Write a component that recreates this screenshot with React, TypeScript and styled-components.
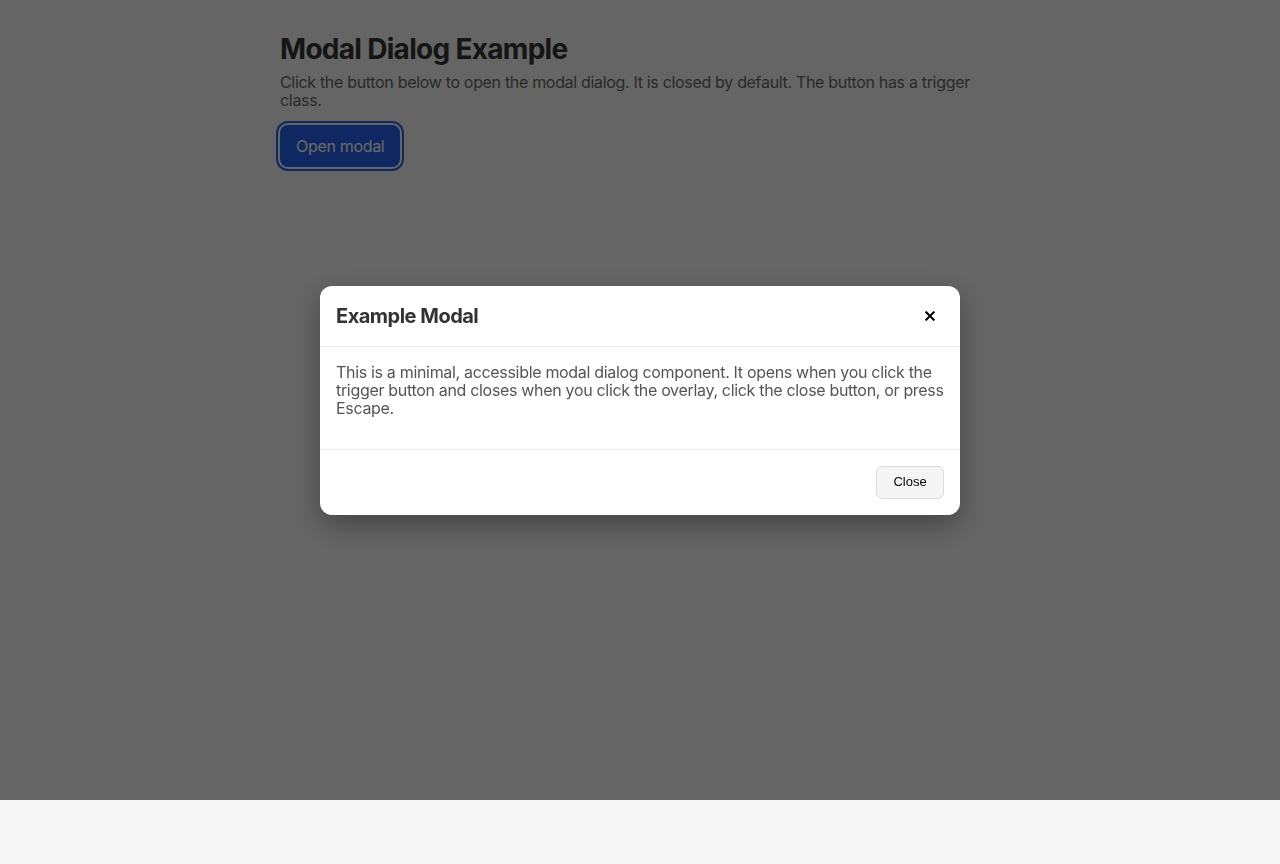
import React from "react";
import styled, { createGlobalStyle } from "styled-components";

const GlobalStyle = createGlobalStyle`
  * { box-sizing: border-box; }
  html, body { margin: 0; padding: 0; }
  body {
    background: #f6f6f6;
    font-family: Inter, "Noto Sans", "Liberation Sans", sans-serif;
    color: #333;
  }
`;

const Page = styled.main`
  max-width: 720px;
  margin: 0 auto;
  padding: 32px 0;
`;

const Title = styled.h1`
  margin: 0 0 7px;
  font-size: 28px;
  line-height: 34px;
  font-weight: 700;
  color: #333;
  letter-spacing: -0.7px;
`;

const Intro = styled.p`
  margin: 0 0 16px;
  font-size: 16px;
  line-height: 18px;
  color: #666;
  letter-spacing: -0.32px;
`;

const TriggerButton = styled.button`
  font-family: inherit;
  font-size: 16px;
  line-height: 20px;
  padding: 11px 16px;
  color: #fff;
  background: #2563eb;
  border: none;
  border-radius: 8px;
  cursor: pointer;
  letter-spacing: -0.32px;
  box-shadow: 0 0 0 2px #f6f6f6, 0 0 0 4px #2563eb;
`;

const Overlay = styled.div`
  position: fixed;
  top: 0;
  left: 0;
  right: 0;
  height: 800px;
  background: rgba(0, 0, 0, 0.59);
  display: flex;
  align-items: center;
  justify-content: center;
`;

const Dialog = styled.div`
  width: 640px;
  background: #fff;
  border-radius: 12px;
  box-shadow: 0 10px 30px rgba(0, 0, 0, 0.35);
  overflow: hidden;
`;

const Header = styled.header`
  display: flex;
  align-items: center;
  justify-content: space-between;
  padding: 16px;
  border-bottom: 1px solid #eaeaea;
`;

const DialogTitle = styled.h2`
  margin: 0;
  font-size: 20px;
  line-height: 28px;
  font-weight: 700;
  color: #333;
  letter-spacing: -0.5px;
`;

const IconButton = styled.button`
  width: 28px;
  height: 28px;
  display: flex;
  align-items: center;
  justify-content: center;
  padding: 0;
  background: transparent;
  border: none;
  cursor: pointer;
  color: #000;
`;

const Body = styled.div`
  padding: 16px 16px 32px;
`;

const BodyText = styled.p`
  margin: 0;
  font-size: 16px;
  line-height: 18px;
  color: #555;
  letter-spacing: -0.32px;
`;

const Footer = styled.footer`
  display: flex;
  justify-content: flex-end;
  padding: 16px;
  border-top: 1px solid #eaeaea;
`;

const SecondaryButton = styled.button`
  font-family: "Liberation Sans", Arial, sans-serif;
  font-size: 13px;
  line-height: 16px;
  height: 33px;
  min-width: 68px;
  padding: 0 16px;
  color: #000;
  background: #f5f5f5;
  border: 1px solid #dcdcdc;
  border-radius: 6px;
  cursor: pointer;
`;

const CloseIcon = () => (
  <svg width="10" height="10" viewBox="0 0 10 10" aria-hidden="true">
    <path d="M1.3 1.3 L8.7 8.7 M8.7 1.3 L1.3 8.7" stroke="#000" strokeWidth="2" strokeLinecap="square" />
  </svg>
);

export default function App() {
  return (
    <>
      <GlobalStyle />
      <Page>
        <Title>Modal Dialog Example</Title>
        <Intro>
          Click the button below to open the modal dialog. It is closed by default. The button has a trigger
          class.
        </Intro>
        <TriggerButton className="trigger">Open modal</TriggerButton>
      </Page>
      <Overlay>
        <Dialog role="dialog" aria-modal="true" aria-labelledby="modal-title">
          <Header>
            <DialogTitle id="modal-title">Example Modal</DialogTitle>
            <IconButton aria-label="Close">
              <CloseIcon />
            </IconButton>
          </Header>
          <Body>
            <BodyText>
              This is a minimal, accessible modal dialog component. It opens when you click the trigger button and
              closes when you click the overlay, click the close button, or press Escape.
            </BodyText>
          </Body>
          <Footer>
            <SecondaryButton>Close</SecondaryButton>
          </Footer>
        </Dialog>
      </Overlay>
    </>
  );
}
